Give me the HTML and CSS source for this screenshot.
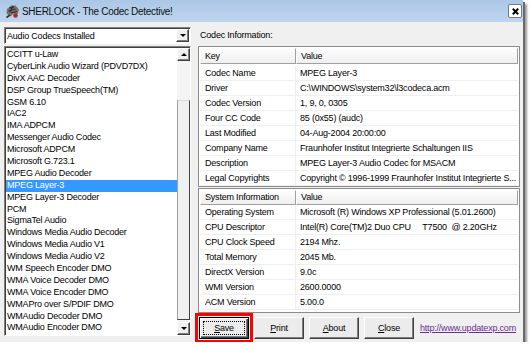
FILE: index.html
```html
<!DOCTYPE html>
<html lang="en">
<head>
    <meta charset="UTF-8">
    <meta name="viewport" content="width=device-width, initial-scale=1.0">
    <title>SHERLOCK - The Codec Detective!</title>
    <link rel="stylesheet" href="styles.css">
</head>
<body>
<div class="window">
    <div class="titlebar">
        <svg class="app-icon" viewBox="0 0 15 15">
            <path d="M2 5 L6 1.5 L10.5 1.5 L14 5.5 L12.5 10 L8.5 9.5 L5.5 12.5 L1.5 9.5 Z" fill="#77716b"/>
            <path d="M4.5 4 L9 3 M3.5 7 L10.5 5 M6 9 L12 7.5 M8 2 L5 8" stroke="#2a2a2a" stroke-width="1.1" fill="none"/>
            <circle cx="10.5" cy="11.5" r="2.3" fill="#b8242a"/>
            <path d="M1.5 13.5 L5 11" stroke="#333" stroke-width="1.6"/>
        </svg>
        <span class="title">SHERLOCK - The Codec Detective!</span>
        <span class="close-btn">
            <svg viewBox="0 0 10 10"><path d="M2 2 L8 8 M8 2 L2 8" stroke="#000" stroke-width="2.2"/></svg>
        </span>
    </div>

    <div class="client">
        <div class="left">
            <div class="combo">
                <span class="combo-text">Audio Codecs Installed</span>
                <span class="drop-btn"><i class="tri-down"></i></span>
            </div>
            <div class="list">
                <ul class="items">
                    <li>CCITT u-Law</li>
                    <li>CyberLink Audio Wizard (PDVD7DX)</li>
                    <li>DivX AAC Decoder</li>
                    <li>DSP Group TrueSpeech(TM)</li>
                    <li>GSM 6.10</li>
                    <li>IAC2</li>
                    <li>IMA ADPCM</li>
                    <li>Messenger Audio Codec</li>
                    <li>Microsoft ADPCM</li>
                    <li>Microsoft G.723.1</li>
                    <li>MPEG Audio Decoder</li>
                    <li class="selected">MPEG Layer-3</li>
                    <li>MPEG Layer-3 Decoder</li>
                    <li>PCM</li>
                    <li>SigmaTel Audio</li>
                    <li>Windows Media Audio Decoder</li>
                    <li>Windows Media Audio V1</li>
                    <li>Windows Media Audio V2</li>
                    <li>WM Speech Encoder DMO</li>
                    <li>WMA Voice Decoder DMO</li>
                    <li>WMA Voice Encoder DMO</li>
                    <li>WMAPro over S/PDIF DMO</li>
                    <li>WMAudio Decoder DMO</li>
                    <li>WMAudio Encoder DMO</li>
                </ul>
                <div class="vscroll">
                    <span class="sb-btn"><i class="tri-up"></i></span>
                    <span class="sb-track"><span class="sb-thumb"></span></span>
                    <span class="sb-btn"><i class="tri-down"></i></span>
                </div>
            </div>
        </div>

        <div class="right">
            <div class="label">Codec Information:</div>

            <div class="lv lv-codec">
                <div class="lv-head"><span class="key">Key</span><span class="val">Value</span></div>
                <div class="lv-body">
                    <div class="row"><span class="key">Codec Name</span><span class="val">MPEG Layer-3</span></div>
                    <div class="row"><span class="key">Driver</span><span class="val">C:\WINDOWS\system32\l3codeca.acm</span></div>
                    <div class="row"><span class="key">Codec Version</span><span class="val">1, 9, 0, 0305</span></div>
                    <div class="row"><span class="key">Four CC Code</span><span class="val">85 (0x55) (audc)</span></div>
                    <div class="row"><span class="key">Last Modified</span><span class="val">04-Aug-2004 20:00:00</span></div>
                    <div class="row"><span class="key">Company Name</span><span class="val">Fraunhofer Institut Integrierte Schaltungen IIS</span></div>
                    <div class="row"><span class="key">Description</span><span class="val">MPEG Layer-3 Audio Codec for MSACM</span></div>
                    <div class="row"><span class="key">Legal Copyrights</span><span class="val">Copyright © 1996-1999 Fraunhofer Institut Integrierte S...</span></div>
                </div>
            </div>

            <div class="lv lv-system">
                <div class="lv-head"><span class="key">System Information</span><span class="val">Value</span></div>
                <div class="lv-body">
                    <div class="row"><span class="key">Operating System</span><span class="val">Microsoft (R) Windows XP Professional (5.01.2600)</span></div>
                    <div class="row"><span class="key">CPU Descriptor</span><span class="val">Intel(R) Core(TM)2 Duo CPU&nbsp;&nbsp;&nbsp;&nbsp;&nbsp;T7500&nbsp; @ 2.20GHz</span></div>
                    <div class="row"><span class="key">CPU Clock Speed</span><span class="val">2194 Mhz.</span></div>
                    <div class="row"><span class="key">Total Memory</span><span class="val">2045 Mb.</span></div>
                    <div class="row"><span class="key">DirectX Version</span><span class="val">9.0c</span></div>
                    <div class="row"><span class="key">WMI Version</span><span class="val">2600.0000</span></div>
                    <div class="row"><span class="key">ACM Version</span><span class="val">5.00.0</span></div>
                </div>
            </div>

            <div class="buttons">
                <button class="btn default"><span class="focus"><u>S</u>ave</span></button>
                <button class="btn"><u>P</u>rint</button>
                <button class="btn"><u>A</u>bout</button>
                <button class="btn"><u>C</u>lose</button>
                <a class="link" href="#">http://www.updatexp.com</a>
            </div>
        </div>
    </div>
</div>
</body>
</html>
```

FILE: styles.css
```css
*{
    padding: 0;
    margin: 0;
    box-sizing: border-box;
}
body{
    background-color: #fff;
    font-family: "Liberation Sans", Arial, sans-serif;
    font-size: 9px;
    letter-spacing: -0.2px;
    color: #000;
}
.window{
    width: 523px;
    height: 342px;
    background-color: #f0f0f0;
    box-shadow: 2px 2px 0 #6a6a6a, 4px 4px 2px #9a9a9a;
    display: flex;
    flex-direction: column;
}
.titlebar{
    height: 22px;
    background: linear-gradient(#abc7e6, #bfd5ee);
    display: flex;
    align-items: center;
    padding: 0 1px 0 5px;
}
.app-icon{
    width: 15px;
    height: 15px;
    margin-right: 2px;
}
.title{
    flex: 1;
    font-size: 10px;
    letter-spacing: -0.3px;
    color: #111;
}
.close-btn{
    width: 14px;
    height: 14px;
    background-color: #fff;
    border: 1px solid #7a7a7a;
    border-radius: 2px;
    display: flex;
    align-items: center;
    justify-content: center;
}
.close-btn svg{
    width: 9px;
    height: 9px;
}

.client{
    flex: 1;
    display: flex;
    gap: 7px;
    padding: 5px 0 0 4px;
}

/* left side */
.left{
    width: 187px;
    display: flex;
    flex-direction: column;
    gap: 2px;
}
.combo{
    height: 17px;
    background-color: #fff;
    border: 1px solid;
    border-color: #808080 #fff #fff #808080;
    box-shadow: inset 1px 1px #404040;
    display: flex;
    align-items: center;
    padding: 1px 1px 1px 2px;
}
.combo-text{
    flex: 1;
}
.drop-btn, .sb-btn{
    width: 13px;
    height: 13px;
    background-color: #f0f0f0;
    border: 1px solid;
    border-color: #fff #404040 #404040 #fff;
    box-shadow: inset -1px -1px #808080;
    display: flex;
    align-items: center;
    justify-content: center;
}
.tri-down{
    border-left: 3px solid transparent;
    border-right: 3px solid transparent;
    border-top: 3px solid #000;
}
.tri-up{
    border-left: 3px solid transparent;
    border-right: 3px solid transparent;
    border-bottom: 3px solid #000;
}
.list{
    height: 290px;
    background-color: #fff;
    border: 1px solid;
    border-color: #808080 #fff #fff #808080;
    box-shadow: inset 1px 1px #404040;
    display: flex;
    padding: 1px 0 0 1px;
}
.items{
    flex: 1;
    list-style: none;
    padding-top: 1px;
}
.items li{
    height: 11.9px;
    line-height: 11.9px;
    padding-left: 1px;
    white-space: nowrap;
}
.items li.selected{
    background-color: #3399ff;
    color: #fff;
}
.vscroll{
    width: 13px;
    display: flex;
    flex-direction: column;
    background-color: #f4f4f4;
}
.sb-track{
    flex: 1;
    display: flex;
    flex-direction: column;
    padding: 39px 0 2px;
}
.sb-thumb{
    flex: 1;
    background-color: #f0f0f0;
    border: 1px solid;
    border-color: #d8d8d8 #404040 #404040 #a0a0a0;
}

/* right side */
.right{
    width: 322px;
    display: flex;
    flex-direction: column;
}
.label{
    height: 19px;
    line-height: 17px;
    padding-left: 2px;
}
.lv{
    background-color: #fff;
    border: 1px solid #8c8c8c;
    padding: 1px 1px 0;
}
.lv-system{
    margin-top: 1px;
    padding-bottom: 2px;
}
.lv-head{
    display: flex;
    height: 15px;
    line-height: 13px;
}
.lv-head span{
    background: linear-gradient(#fdfdfd, #efefef);
    border: 1px solid;
    border-color: #fff #a0a0a0 #a0a0a0 #fff;
}
.lv-codec .lv-head{
    height: 16px;
    line-height: 14px;
}
.lv-codec .lv-body{
    padding-top: 2px;
}
.key{
    width: 96px;
    padding-left: 5px;
    white-space: nowrap;
}
.val{
    flex: 1;
    padding-left: 4px;
    white-space: nowrap;
    overflow: hidden;
}
.lv-head .key{
    padding-left: 4px;
}
.lv-head .val{
    padding-left: 4px;
}
.row{
    display: flex;
    height: 15px;
    line-height: 14px;
    border-bottom: 1px solid #efefef;
}
.row .key{
    border-right: 1px solid #efefef;
}

/* buttons */
.buttons{
    display: flex;
    align-items: center;
    gap: 5px;
    margin-top: 4px;
    padding-left: 1px;
}
.btn{
    width: 50px;
    height: 22px;
    font-family: inherit;
    font-size: 9px;
    letter-spacing: -0.2px;
    background-color: #ececec;
    border: 1px solid;
    border-color: #fff #404040 #404040 #fff;
    box-shadow: inset -1px -1px #808080;
    color: #000;
}
.btn.default{
    border: 1px solid #000;
    box-shadow: inset 1px 1px #fff, inset -1px -1px #404040, inset -2px -2px #808080;
    outline: 3px solid #f00;
    outline-offset: 1px;
    padding: 3px;
}
.focus{
    display: flex;
    height: 100%;
    align-items: center;
    justify-content: center;
    border: 1px dotted #000;
}
.link{
    margin-left: 1px;
    color: #6b2d96;
    text-decoration: underline;
}
```
